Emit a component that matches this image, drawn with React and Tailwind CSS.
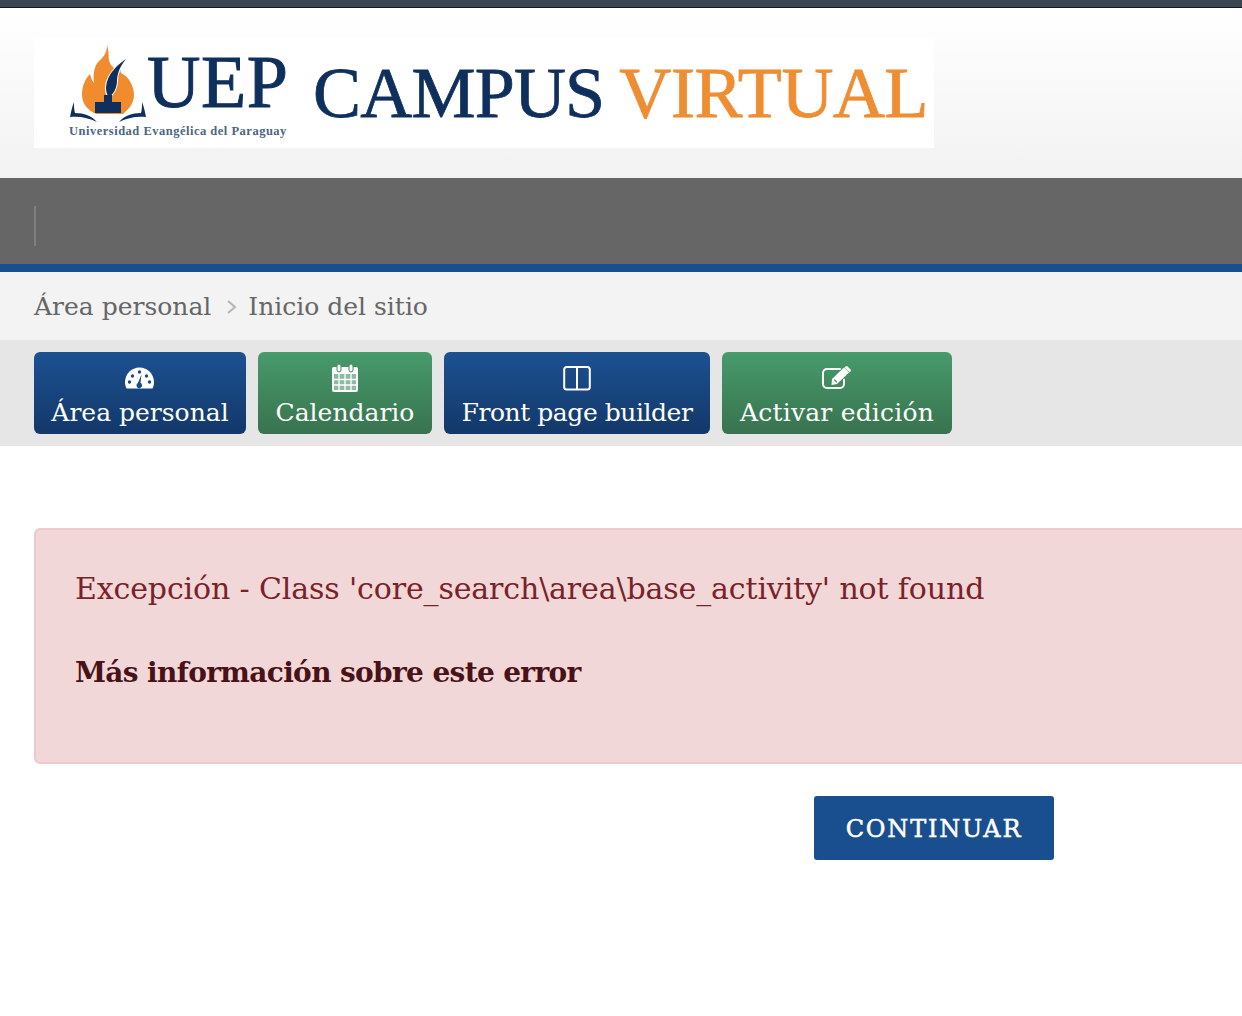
const SLAB = { fontFamily: '"Roboto Slab", "DejaVu Serif", serif' };

function GaugeIcon() {
  return (
    <svg width="30" height="24" viewBox="0 0 30 24" fill="none">
      <path d="M1.5 22.5C.6 20.6 0 18.5 0 16.2 0 8 6.4 1.5 14.5 1.5S29 8 29 16.2c0 2.3-.6 4.4-1.5 6.3z" fill="#fff" />
      <circle cx="7.5" cy="10" r="1.7" fill="#1a4a86" />
      <circle cx="14.5" cy="6" r="1.7" fill="#1a4a86" />
      <circle cx="21.5" cy="10" r="1.7" fill="#1a4a86" />
      <circle cx="4.5" cy="16" r="1.7" fill="#1a4a86" />
      <circle cx="24.5" cy="16" r="1.7" fill="#1a4a86" />
      <path d="M16.5 8.5l-1 8.3a2.8 2.8 0 1 1-2.6.1z" fill="#1a4a86" />
    </svg>
  );
}

function CalendarIcon() {
  return (
    <svg width="28" height="30" viewBox="0 0 28 30" fill="none">
      <rect x="1" y="4" width="26" height="25" rx="2" fill="#fff" />
      <rect x="6" y="1" width="4" height="8" rx="2" fill="#fff" stroke="#438a64" strokeWidth="1" />
      <rect x="18" y="1" width="4" height="8" rx="2" fill="#fff" stroke="#438a64" strokeWidth="1" />
      <rect x="3" y="11" width="22" height="16" fill="#438a64" opacity=".6" />
      <path d="M8 11v16M14 11v16M20 11v16M3 16.5h22M3 22h22" stroke="#fff" strokeWidth="1.3" />
    </svg>
  );
}

function ColumnsIcon() {
  return (
    <svg width="28" height="26" viewBox="0 0 28 26" fill="none" stroke="#fff" strokeWidth="2">
      <rect x="1.2" y="2" width="25.6" height="22.5" rx="2.5" />
      <path d="M14 2v22.5" />
    </svg>
  );
}

function EditIcon() {
  return (
    <svg width="30" height="24" viewBox="0 0 30 24" fill="none">
      <path d="M22 13.5V18a4 4 0 0 1-4 4H5a4 4 0 0 1-4-4V7a4 4 0 0 1 4-4h13" stroke="#fff" strokeWidth="2" strokeLinecap="round" />
      <path d="M10 13l12-11.5 5 5L15 18l-5.5 1z" fill="#fff" />
      <path d="M23.5 0.5l1.5-.5 4 4-.5 1.5-1 1-5-5z" fill="#fff" />
      <path d="M12.2 13.5l2.8 2.8" stroke="#438a64" strokeWidth="1.2" />
    </svg>
  );
}

function LogoMark() {
  return (
    <svg width="78" height="77" viewBox="0 0 78 77" className="shrink-0">
      <path d="M38 0c3 9 0 14 4 20 4 5 6 4 8 3 1 2 2 3 2 5 8 4 13 13 13 22 0 8-5 14-11 19H27C18 65 13 58 13 50c0-10 4-17 8-21 1 4 2 7 4 9-1-9 0-17 5-22 5-4 8-9 8-16z" fill="#f08c2e" />
      <path d="M57 14C50 19 38 28 37 42c-.2 4 1 8 3 10 5-3 8-10 8-16 0-7 3-15 9-22z" fill="#0f2f5c" stroke="#fff" strokeWidth="2" paintOrder="stroke" />
      <path d="M35 50h8v7h9v11H26V57h9z" fill="#0f2f5c" />
      <path d="M1 72c1-5 2-10 4-15 0 4 0 8 1 11 9 0 17 3 22 9-8-4-17-6-27-5zM77 72c-1-5-2-10-4-15 0 4 0 8-1 11-9 0-17 3-22 9 8-4 17-6 27-5z" fill="#0f2f5c" />
    </svg>
  );
}

function Logo() {
  return (
    <div className="w-[900px] h-[110px] bg-white flex items-start pl-[35px]" style={{ fontFamily: '"Liberation Serif", serif' }}>
      <div className="w-[232px] shrink-0">
        <div className="flex items-end h-[84px] pt-[7px]">
          <LogoMark />
          <span className="text-[#0f2f5c] text-[74px] leading-none mb-[3px] tracking-[0.6px] [-webkit-text-stroke:1px_#0f2f5c]">UEP</span>
        </div>
        <div className="text-[12.5px] leading-none font-bold text-[#4e6484] mt-[3px] tracking-[0.5px] whitespace-nowrap">Universidad Evangélica del Paraguay</div>
      </div>
      <div className="text-[72px] leading-none whitespace-nowrap mt-[19px] ml-[12px]">
        <span className="text-[#0f2f5c] tracking-[-0.8px] [-webkit-text-stroke:0.8px_#0f2f5c]">CAMPUS</span>
        <span className="text-[#ef8d33] ml-[15px] tracking-[-0.4px] [-webkit-text-stroke:0.8px_#ef8d33]">VIRTUAL</span>
      </div>
    </div>
  );
}

const BUTTONS = [
  { label: 'Área personal', Icon: GaugeIcon, blue: true, width: 'w-[212px]', track: 'tracking-normal' },
  { label: 'Calendario', Icon: CalendarIcon, blue: false, width: 'w-[174px]', track: 'tracking-normal' },
  { label: 'Front page builder', Icon: ColumnsIcon, blue: true, width: 'w-[266px]', track: 'tracking-[-0.45px]' },
  { label: 'Activar edición', Icon: EditIcon, blue: false, width: 'w-[230px]', track: 'tracking-[0.2px]' },
];

export default function App() {
  return (
    <div className="w-[1242px] h-[1016px] overflow-hidden bg-white font-light" style={SLAB}>
      <div className="h-2 bg-[#3a4652] border-b border-[#15191d]" />

      <header className="h-[170px] px-[34px] pt-[30px] bg-gradient-to-b from-white to-[#f2f2f2]">
        <Logo />
      </header>

      <nav className="h-[94px] bg-[#666666] border-b-[8px] border-[#1a4f8f] pl-[34px] pt-[28px]">
        <div className="w-[2px] h-10 bg-[#7f7f7f]" />
      </nav>

      <div className="h-[68px] bg-[#f3f3f3] px-[34px] pt-[2px] flex items-center text-[25px] text-[#666666] whitespace-nowrap">
        <span>Área personal</span>
        <svg width="12" height="16" viewBox="0 0 12 16" fill="none" stroke="#b5b5b5" strokeWidth="2" className="ml-[15px] mr-[10px]"><path d="M2 2l7 6-7 6" /></svg>
        <span>Inicio del sitio</span>
      </div>

      <div className="h-[106px] bg-[#e6e6e6] px-[34px] pt-3 flex gap-3">
        {BUTTONS.map(({ label, Icon, blue, width, track }) => (
          <a key={label} className={`${width} h-[82px] rounded-md flex flex-col items-center text-white text-[25px] leading-none whitespace-nowrap bg-gradient-to-b ${blue ? 'from-[#1c5191] to-[#13386a]' : 'from-[#479b6c] to-[#38734f]'}`}>
            <span className="h-[32px] mt-[10px] flex items-center justify-center"><Icon /></span>
            <span className={`mt-[6px] ${track}`}>{label}</span>
          </a>
        ))}
      </div>

      <main className="w-[1800px] ml-[34px] mt-[82px]">
        <div className="h-[236px] rounded-md bg-[#f2d7d9] border-2 border-[#eec8cc] pl-[39px] pt-[41px] text-[#7b2128] text-[30px] leading-[36px] tracking-[-0.13px] whitespace-nowrap">
          <p>Excepción - Class 'core_search\area\base_activity' not found</p>
          <p className="mt-[48px] font-bold text-[#491217] text-[28px] tracking-[-0.65px]">Más información sobre este error</p>
        </div>
        <div className="mt-8 flex justify-center">
          <button className="w-[240px] h-16 pt-[2px] rounded-[3px] bg-[#1a4f8f] text-white text-[24px] tracking-[1.8px] [-webkit-text-stroke:0.5px_white]">CONTINUAR</button>
        </div>
      </main>
    </div>
  );
}
